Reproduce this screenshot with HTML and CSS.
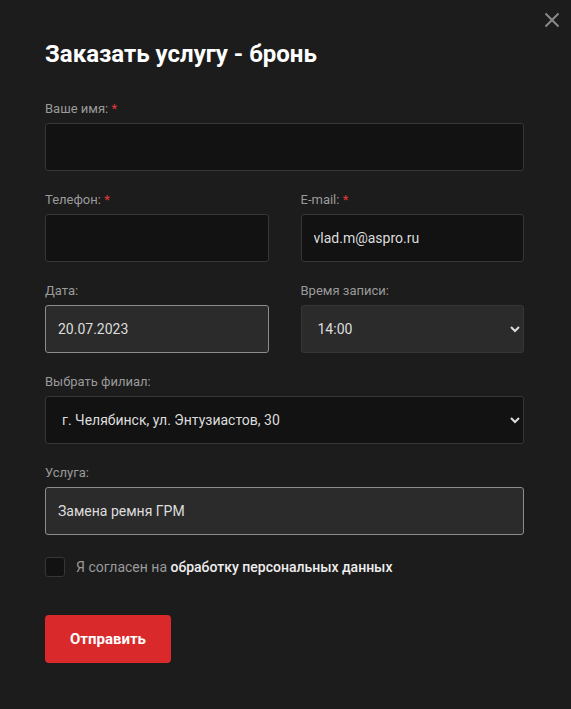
FILE: index.html
```html
<!DOCTYPE html>
<html lang="ru">
<head>
  <meta charset="UTF-8">
  <meta name="viewport" content="width=device-width, initial-scale=1.0">
  <title>Заказать услугу - бронь</title>
  <link rel="stylesheet" href="styles.css">
</head>
<body>
  <!-- Booking popup -->
  <div class="popup">
    <button class="popup-close" type="button" aria-label="Закрыть">
      <svg width="16" height="16" viewBox="0 0 16 16">
        <path d="M1.5 1.5 L14.5 14.5 M14.5 1.5 L1.5 14.5" stroke="#8a8a8a" stroke-width="2" fill="none"/>
      </svg>
    </button>

    <h1 class="popup-title">Заказать услугу - бронь</h1>

    <form class="form">
      <div class="form-group">
        <label class="form-label" for="name">Ваше имя: <span class="star">*</span></label>
        <input class="form-control" type="text" id="name">
      </div>

      <div class="form-row">
        <div class="form-group">
          <label class="form-label" for="phone">Телефон: <span class="star">*</span></label>
          <input class="form-control" type="text" id="phone">
        </div>
        <div class="form-group">
          <label class="form-label" for="email">E-mail: <span class="star">*</span></label>
          <input class="form-control" type="text" id="email" value="vlad.m@aspro.ru">
        </div>
      </div>

      <div class="form-row">
        <div class="form-group">
          <label class="form-label" for="date">Дата:</label>
          <input class="form-control filled active" type="text" id="date" value="20.07.2023">
        </div>
        <div class="form-group">
          <label class="form-label" for="time">Время записи:</label>
          <select class="form-control form-select filled" id="time">
            <option>14:00</option>
          </select>
        </div>
      </div>

      <div class="form-group">
        <label class="form-label" for="branch">Выбрать филиал:</label>
        <select class="form-control form-select" id="branch">
          <option>г. Челябинск, ул. Энтузиастов, 30</option>
        </select>
      </div>

      <div class="form-group">
        <label class="form-label" for="service">Услуга:</label>
        <input class="form-control filled active" type="text" id="service" value="Замена ремня ГРМ">
      </div>

      <label class="agree">
        <input class="agree-box" type="checkbox">
        <span>Я согласен на <b>обработку персональных данных</b></span>
      </label>

      <button class="btn-submit" type="submit">Отправить</button>
    </form>
  </div>
</body>
</html>
```

FILE: styles.css
```css
/* Page base */
html {
  color-scheme: dark;
}

body {
  margin: 0;
  background: #1c1c1c;
  font-family: Roboto, 'Liberation Sans', sans-serif;
  color: #ddd;
}

/* Popup container */
.popup {
  position: relative;
  padding: 39px 47px 47px 45px;
}

.popup-close {
  position: absolute;
  top: 12px;
  right: 11px;
  width: 16px;
  height: 16px;
  padding: 0;
  border: none;
  background: none;
  cursor: pointer;
}

.popup-close svg {
  display: block;
}

.popup-title {
  margin: 0 0 29px;
  font-size: 24px;
  line-height: 30px;
  font-weight: 700;
  color: #fff;
}

/* Form fields */
.form-row {
  display: grid;
  grid-template-columns: 1fr 1fr;
  column-gap: 32px;
}

.form-group {
  margin-bottom: 18px;
}

.form-label {
  display: block;
  padding-top: 2px;
  margin-bottom: 5px;
  font-size: 13px;
  line-height: 18px;
  color: #9a9a9a;
}

.star {
  color: #e03a3a;
}

.form-control {
  display: block;
  box-sizing: border-box;
  width: 100%;
  height: 48px;
  padding: 0 12px;
  border: 1px solid #363636;
  border-radius: 3px;
  background: #121212;
  font-family: inherit;
  font-size: 14px;
  color: #ddd;
  outline: none;
}

.form-control.filled {
  background: #2b2b2b;
}

.form-control.active {
  border-color: #8c8c8c;
}

.form-select {
  padding-left: 12px;
  padding-right: 6px;
}

/* Consent checkbox */
.agree {
  display: flex;
  align-items: center;
  gap: 11px;
  margin-top: 22px;
  font-size: 14px;
  color: #9a9a9a;
  cursor: pointer;
}

.agree b {
  font-weight: 500;
  color: #eee;
}

.agree-box {
  appearance: none;
  flex: none;
  width: 20px;
  height: 20px;
  margin: 0;
  border: 1px solid #363636;
  border-radius: 3px;
  background: #121212;
}

/* Submit */
.btn-submit {
  display: block;
  margin-top: 38px;
  width: 126px;
  height: 48px;
  border: none;
  border-radius: 4px;
  background: #d9292b;
  font-family: inherit;
  font-size: 15px;
  font-weight: 700;
  color: #fff;
  cursor: pointer;
}
```
